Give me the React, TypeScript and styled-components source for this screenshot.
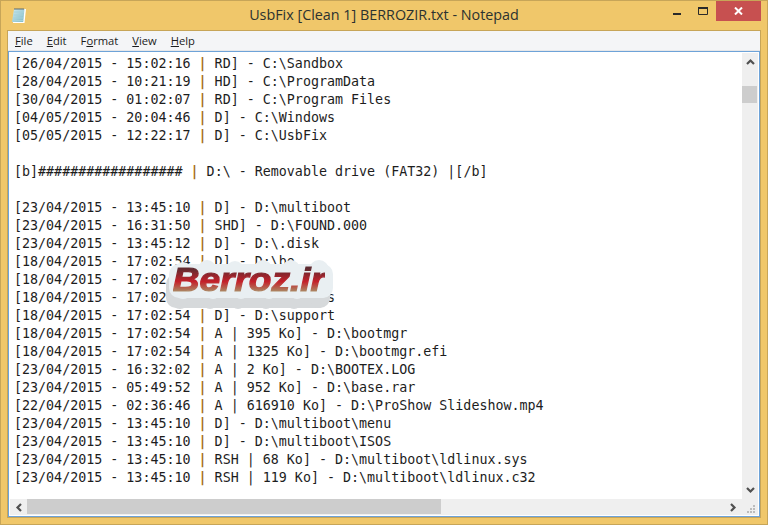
import styled, { createGlobalStyle } from "styled-components";

const Global = createGlobalStyle`
  html, body { margin: 0; padding: 0; }
  body { width: 768px; height: 525px; overflow: hidden; background: #efc76b; }
  #root { width: 768px; height: 525px; }
`;

const Frame = styled.div`
  position: relative;
  box-sizing: border-box;
  width: 768px;
  height: 525px;
  background: #f0c76a;
  border: 1px solid #c7a558;
  display: flex;
  flex-direction: column;
  padding: 0 6px 6px 6px;
`;

const TitleBar = styled.div`
  height: 29px;
  flex: none;
  display: flex;
  align-items: center;
  position: relative;
`;

const AppIcon = styled.svg`
  width: 18px;
  height: 18px;
  flex: none;
  margin: 0 0 0 2px;
`;

const Title = styled.div`
  position: absolute;
  left: 0;
  right: 0;
  top: 4px;
  text-align: center;
  font: 14.35px "Open Sans", "Liberation Sans", sans-serif;
  color: #2b3230;
  white-space: nowrap;
`;

const WindowButtons = styled.div`
  margin-left: auto;
  display: flex;
  align-items: flex-start;
  align-self: flex-start;
  height: 20px;
`;

const WinButton = styled.div<{ $close?: boolean }>`
  width: ${({ $close }) => ($close ? "45px" : "26px")};
  height: 20px;
  display: flex;
  align-items: center;
  justify-content: center;
  background: ${({ $close }) => ($close ? "#c75050" : "transparent")};
`;

const MinGlyph = styled.svg`
  margin-top: 6px;
`;

const Client = styled.div`
  flex: 1;
  min-height: 0;
  display: flex;
  flex-direction: column;
  border: 1px solid #c7a558;
  background: #f4f5f7;
`;

const MenuBar = styled.div`
  height: 19px;
  flex: none;
  display: flex;
  align-items: center;
  gap: 14px;
  padding-left: 7px;
  background: #f4f5f7;
  border-bottom: 1px solid #e6e7e9;
  font: 11.2px "Open Sans", "Liberation Sans", sans-serif;
  color: #1c1c1c;
`;

const MenuItem = styled.span`
  & u { text-underline-offset: 1px; }
`;

const EditArea = styled.div`
  flex: 1;
  min-height: 0;
  display: grid;
  grid-template-columns: 1fr 16px;
  grid-template-rows: 1fr 16px;
  border: 1px solid #6ea3d8;
  padding: 1px;
  background: #fff;
`;

const TextPane = styled.pre`
  margin: 0;
  padding: 2px 0 0 4px;
  overflow: hidden;
  background: #fff;
  font: 13.33px/18px "DejaVu Sans Mono", "Liberation Mono", monospace;
  color: #1d1d1d;
`;

const Line = styled.div`
  height: 18px;
  white-space: pre;
`;

const Bar = styled.span`
  color: #a8701c;
  font-weight: bold;
`;

const VScroll = styled.div`
  background: #efefef;
  display: flex;
  flex-direction: column;
  align-items: stretch;
`;

const ScrollArrow = styled.div<{ $horizontal?: boolean }>`
  flex: none;
  width: ${({ $horizontal }) => ($horizontal ? "17px" : "auto")};
  height: ${({ $horizontal }) => ($horizontal ? "auto" : "17px")};
  display: flex;
  align-items: center;
  justify-content: center;
`;

const VThumb = styled.div`
  height: 17px;
  margin: 16px 1px 0 0;
  background: #cdcdcd;
`;

const Track = styled.div`
  flex: 1;
`;

const HScroll = styled.div`
  background: #efefef;
  display: flex;
  align-items: stretch;
`;

const HThumb = styled.div`
  width: 414px;
  margin-bottom: 1px;
  background: #cdcdcd;
`;

const Corner = styled.div`
  background: #efefef;
  display: flex;
  align-items: flex-end;
  justify-content: flex-end;
  padding: 0 3px 2px 0;
`;

const Watermark = styled.div`
  position: absolute;
  left: 162px;
  top: 257px;
  width: 172px;
  height: 52px;
  display: flex;
  justify-content: center;
  align-items: flex-start;
`;

const WatermarkBlob = styled.svg`
  position: absolute;
  left: 0;
  top: 0;
`;

const WatermarkText = styled.span`
  position: relative;
  display: inline-block;
  margin-top: 7px;
  font: italic bold 33px/30px "Liberation Sans", sans-serif;
  transform: scaleX(1.12);
  background: linear-gradient(180deg, #5e2a30 12%, #c4202a 55%, #a8946a 92%);
  -webkit-background-clip: text;
  background-clip: text;
  color: transparent;
  -webkit-text-stroke: 1.2px transparent;
`;

const rows: [string, string][] = [
  ["[26/04/2015 - 15:02:16 ", " RD] - C:\\Sandbox"],
  ["[28/04/2015 - 10:21:19 ", " HD] - C:\\ProgramData"],
  ["[30/04/2015 - 01:02:07 ", " RD] - C:\\Program Files"],
  ["[04/05/2015 - 20:04:46 ", " D] - C:\\Windows"],
  ["[05/05/2015 - 12:22:17 ", " D] - C:\\UsbFix"],
  ["", ""],
  ["[b]################## ", " D:\\ - Removable drive (FAT32) |[/b]"],
  ["", ""],
  ["[23/04/2015 - 13:45:10 ", " D] - D:\\multiboot"],
  ["[23/04/2015 - 16:31:50 ", " SHD] - D:\\FOUND.000"],
  ["[23/04/2015 - 13:45:12 ", " D] - D:\\.disk"],
  ["[18/04/2015 - 17:02:54 ", " D] - D:\\bo"],
  ["[18/04/2015 - 17:02:54 ", " D]"],
  ["[18/04/2015 - 17:02:54 ", " D] - D:\\sources"],
  ["[18/04/2015 - 17:02:54 ", " D] - D:\\support"],
  ["[18/04/2015 - 17:02:54 ", " A | 395 Ko] - D:\\bootmgr"],
  ["[18/04/2015 - 17:02:54 ", " A | 1325 Ko] - D:\\bootmgr.efi"],
  ["[23/04/2015 - 16:32:02 ", " A | 2 Ko] - D:\\BOOTEX.LOG"],
  ["[23/04/2015 - 05:49:52 ", " A | 952 Ko] - D:\\base.rar"],
  ["[22/04/2015 - 02:36:46 ", " A | 616910 Ko] - D:\\ProShow Slideshow.mp4"],
  ["[23/04/2015 - 13:45:10 ", " D] - D:\\multiboot\\menu"],
  ["[23/04/2015 - 13:45:10 ", " D] - D:\\multiboot\\ISOS"],
  ["[23/04/2015 - 13:45:10 ", " RSH | 68 Ko] - D:\\multiboot\\ldlinux.sys"],
  ["[23/04/2015 - 13:45:10 ", " RSH | 119 Ko] - D:\\multiboot\\ldlinux.c32"],
];

const Chevron = ({ dir }: { dir: "up" | "down" | "left" | "right" }) => {
  const rot = { up: 0, right: 90, down: 180, left: 270 }[dir];
  return (
    <svg width="9" height="7" viewBox="0 0 9 7" style={{ transform: `rotate(${rot}deg)` }}>
      <path d="M1 6 L4.5 2.5 L8 6" fill="none" stroke="#505050" strokeWidth="2.2" />
    </svg>
  );
};

// lumpy sticker shape behind the logo text
const BlobShape = ({ fill, dx, dy }: { fill: string; dx: number; dy: number }) => (
  <g fill={fill} transform={`translate(${dx} ${dy})`}>
    <rect x="6" y="6" width="164" height="34" rx="10" />
    <circle cx="20" cy="13" r="9" />
    <circle cx="44" cy="11" r="9" />
    <circle cx="72" cy="12" r="9" />
    <circle cx="100" cy="11" r="9" />
    <circle cx="128" cy="11" r="9" />
    <circle cx="156" cy="12" r="10" />
    <circle cx="20" cy="33" r="8" />
    <circle cx="50" cy="34" r="7" />
    <circle cx="78" cy="34" r="7" />
    <circle cx="106" cy="34" r="7" />
    <circle cx="134" cy="34" r="7" />
    <circle cx="158" cy="32" r="8" />
  </g>
);

export default function App() {
  return (
    <>
      <Global />
      <Frame>
        <TitleBar>
          <AppIcon viewBox="0 0 18 18">
            <defs>
              <linearGradient id="pad" x1="0" y1="0" x2="1" y2="1">
                <stop offset="0" stopColor="#cfeaf0" />
                <stop offset="1" stopColor="#7fb9c4" />
              </linearGradient>
            </defs>
            <path d="M5.5 2 H17 L15.5 16 H4 Z" fill="#fff" />
            <path d="M5 2 H15.5 L14.2 15 H3 Z" fill="url(#pad)" />
            <path d="M5 5 H15 M4.6 8 H14.8 M4.3 11 H14.5 M4 13.5 H14.2" stroke="#a5d2da" strokeWidth="1" />
            <path d="M6 1 V3 M8 1 V3 M10 1 V3 M12 1 V3 M14 1 V3" stroke="#5c6a6e" strokeWidth="1" />
          </AppIcon>
          <Title>UsbFix [Clean 1] BERROZIR.txt - Notepad</Title>
          <WindowButtons>
            <WinButton>
              <MinGlyph width="8" height="2" viewBox="0 0 8 2">
                <rect width="8" height="2" fill="#2a2a2a" />
              </MinGlyph>
            </WinButton>
            <WinButton>
              <svg width="10" height="8" viewBox="0 0 10 8">
                <path d="M0.5 1 H9.5 V7.5 H0.5 Z" fill="none" stroke="#2a2a2a" />
                <rect width="10" height="2" fill="#2a2a2a" />
              </svg>
            </WinButton>
            <WinButton $close>
              <svg width="9" height="8" viewBox="0 0 9 8">
                <path d="M1 0.5 L8 7.5 M8 0.5 L1 7.5" stroke="#fff" strokeWidth="2" />
              </svg>
            </WinButton>
          </WindowButtons>
        </TitleBar>
        <Client>
          <MenuBar>
            <MenuItem><u>F</u>ile</MenuItem>
            <MenuItem><u>E</u>dit</MenuItem>
            <MenuItem>F<u>o</u>rmat</MenuItem>
            <MenuItem><u>V</u>iew</MenuItem>
            <MenuItem><u>H</u>elp</MenuItem>
          </MenuBar>
          <EditArea>
            <TextPane>
              {rows.map(([a, b], i) => (
                <Line key={i}>
                  {a}
                  {b && <Bar>|</Bar>}
                  {b}
                </Line>
              ))}
            </TextPane>
            <VScroll>
              <ScrollArrow><Chevron dir="up" /></ScrollArrow>
              <VThumb />
              <Track />
              <ScrollArrow><Chevron dir="down" /></ScrollArrow>
            </VScroll>
            <HScroll>
              <ScrollArrow $horizontal><Chevron dir="left" /></ScrollArrow>
              <HThumb />
              <Track />
              <ScrollArrow $horizontal><Chevron dir="right" /></ScrollArrow>
            </HScroll>
            <Corner>
              <svg width="8" height="8" viewBox="0 0 8 8" fill="#bcbcbc">
                <rect x="6" y="0" width="2" height="2" />
                <rect x="3" y="3" width="2" height="2" />
                <rect x="6" y="3" width="2" height="2" />
                <rect x="0" y="6" width="2" height="2" />
                <rect x="3" y="6" width="2" height="2" />
                <rect x="6" y="6" width="2" height="2" />
              </svg>
            </Corner>
          </EditArea>
        </Client>
        <Watermark>
          <WatermarkBlob width="172" height="52" viewBox="0 0 172 52">
            <BlobShape fill="#d6d9db" dx={-3} dy={10} />
            <BlobShape fill="#e9eff2" dx={0} dy={0} />
          </WatermarkBlob>
          <WatermarkText>Berroz.ir</WatermarkText>
        </Watermark>
      </Frame>
    </>
  );
}
